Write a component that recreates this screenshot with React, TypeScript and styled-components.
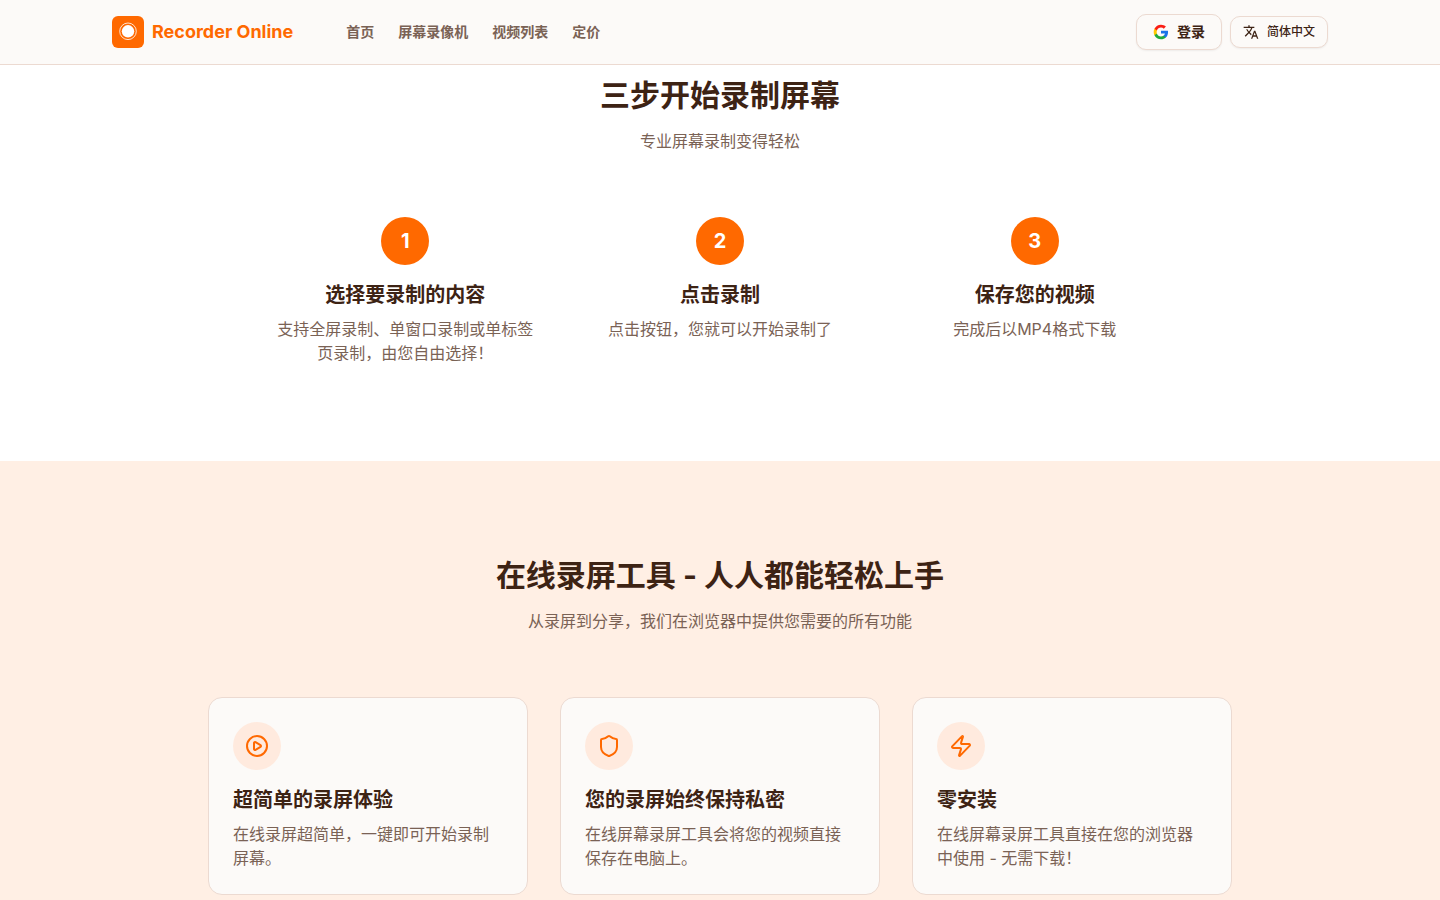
import React from 'react';
import styled, { createGlobalStyle } from 'styled-components';
import { CirclePlay, Shield, Zap } from 'lucide-react';
import { MdTranslate } from 'react-icons/md';

const color = {
  brand: '#ff6900',
  ink: '#3d2314',
  muted: '#7a6255',
  surface: '#fcfaf8',
  line: '#ecdad1',
  peach: '#ffefe4',
  badge: '#ffeade',
};

const GlobalStyle = createGlobalStyle`
  *, *::before, *::after { box-sizing: border-box; }
  body {
    margin: 0;
    background: #ffffff;
    color: ${color.ink};
    font-family: Inter, 'Noto Sans CJK SC', sans-serif;
    font-size: 16px;
    line-height: 24px;
    -webkit-font-smoothing: antialiased;
  }
  h1, h2, h3, p, ul, ol { margin: 0; padding: 0; }
  ul, ol { list-style: none; }
`;

const Page = styled.div`
  min-height: 100vh;
  display: flex;
  flex-direction: column;
`;

const Header = styled.header`
  position: sticky;
  top: 0;
  z-index: 10;
  background: ${color.surface};
  border-bottom: 1px solid ${color.line};
`;

const HeaderInner = styled.div`
  max-width: 1280px;
  height: 64px;
  margin: 0 auto;
  padding: 0 32px;
  display: flex;
  align-items: center;
`;

const Brand = styled.a`
  display: flex;
  align-items: center;
  gap: 8px;
  color: ${color.brand};
  font-size: 18px;
  line-height: 28px;
  font-weight: 700;
  text-decoration: none;
`;

const Nav = styled.nav`
  display: flex;
  gap: 24px;
  margin-left: 53px;
`;

const NavLink = styled.a`
  color: ${color.muted};
  font-size: 14px;
  line-height: 20px;
  font-weight: 600;
  text-decoration: none;
`;

const Actions = styled.div`
  display: flex;
  align-items: center;
  gap: 8px;
  margin-left: auto;
`;

const ActionButton = styled.button<{ $small?: boolean }>`
  display: inline-flex;
  align-items: center;
  gap: 8px;
  height: ${({ $small }) => ($small ? 32 : 36)}px;
  padding: 0 ${({ $small }) => ($small ? 12 : 16)}px;
  border: 1px solid ${color.line};
  border-radius: 10px;
  background: ${color.surface};
  box-shadow: 0 1px 2px rgba(0, 0, 0, 0.06);
  color: ${color.ink};
  font-family: inherit;
  font-size: ${({ $small }) => ($small ? 12 : 14)}px;
  line-height: ${({ $small }) => ($small ? 16 : 20)}px;
  font-weight: ${({ $small }) => ($small ? 500 : 600)};
  cursor: pointer;
`;

const StepsSection = styled.section`
  padding: 12px 32px 96px;
`;

const FeaturesSection = styled.section`
  flex: 1;
  padding: 96px 32px 4px;
  background: ${color.peach};
`;

const SectionHead = styled.div`
  margin-bottom: 64px;
  text-align: center;
`;

const SectionTitle = styled.h2`
  font-size: 30px;
  line-height: 36px;
  font-weight: 700;
`;

const SectionLead = styled.p`
  margin-top: 16px;
  color: ${color.muted};
`;

const StepList = styled.ol`
  max-width: 896px;
  margin: 0 auto;
  display: grid;
  grid-template-columns: repeat(3, 1fr);
  gap: 48px;
`;

const Step = styled.li`
  text-align: center;
`;

const StepNumber = styled.div`
  width: 48px;
  height: 48px;
  margin: 0 auto 16px;
  display: flex;
  align-items: center;
  justify-content: center;
  border-radius: 50%;
  background: ${color.brand};
  color: #ffffff;
  font-size: 20px;
  line-height: 28px;
  font-weight: 700;
`;

const ItemTitle = styled.h3`
  margin-bottom: 8px;
  font-size: 20px;
  line-height: 28px;
  font-weight: 600;
`;

const ItemText = styled.p`
  color: ${color.muted};
`;

const CardGrid = styled.ul`
  max-width: 1024px;
  margin: 0 auto;
  display: grid;
  grid-template-columns: repeat(3, 1fr);
  gap: 32px;
`;

const Card = styled.li`
  padding: 24px;
  border: 1px solid ${color.line};
  border-radius: 14px;
  background: ${color.surface};
`;

const IconBadge = styled.div`
  width: 48px;
  height: 48px;
  margin-bottom: 16px;
  display: flex;
  align-items: center;
  justify-content: center;
  border-radius: 50%;
  background: ${color.badge};
  color: ${color.brand};
`;

const Logo = () => (
  <svg width="32" height="32" viewBox="0 0 32 32" aria-hidden="true">
    <rect width="32" height="32" rx="6" fill={color.brand} />
    <circle cx="16" cy="15.3" r="8.3" fill="none" stroke="#ffffff" strokeWidth="1" opacity="0.8" />
    <circle cx="16" cy="15.3" r="6.2" fill="#ffffff" />
  </svg>
);

const GoogleIcon = () => (
  <svg width="16" height="16" viewBox="0 0 24 24" aria-hidden="true">
    <path fill="#1a73e8" d="M22.56 12.25c0-.78-.07-1.53-.2-2.25H12v4.26h5.92c-.26 1.37-1.04 2.53-2.21 3.31v2.77h3.57c2.08-1.92 3.28-4.74 3.28-8.09z" />
    <path fill="#1fa83c" d="M12 23c2.97 0 5.46-.98 7.28-2.66l-3.57-2.77c-.98.66-2.23 1.06-3.71 1.06-2.86 0-5.29-1.93-6.16-4.53H2.18v2.84C3.99 20.53 7.7 23 12 23z" />
    <path fill="#ffc800" d="M5.84 14.09c-.22-.66-.35-1.36-.35-2.09s.13-1.43.35-2.09V7.07H2.18C1.43 8.55 1 10.22 1 12s.43 3.45 1.18 4.93l3.66-2.84z" />
    <path fill="#fa1e14" d="M12 5.38c1.62 0 3.06.56 4.21 1.64l3.15-3.15C17.45 2.09 14.97 1 12 1 7.7 1 3.99 3.47 2.18 7.07l3.66 2.84C6.71 7.31 9.14 5.38 12 5.38z" />
  </svg>
);

const navItems = ['首页', '屏幕录像机', '视频列表', '定价'];

const steps = [
  { title: '选择要录制的内容', text: '支持全屏录制、单窗口录制或单标签页录制，由您自由选择！' },
  { title: '点击录制', text: '点击按钮，您就可以开始录制了' },
  { title: '保存您的视频', text: '完成后以MP4格式下载' },
];

const features = [
  { Icon: CirclePlay, title: '超简单的录屏体验', text: '在线录屏超简单，一键即可开始录制屏幕。' },
  { Icon: Shield, title: '您的录屏始终保持私密', text: '在线屏幕录屏工具会将您的视频直接保存在电脑上。' },
  { Icon: Zap, title: '零安装', text: '在线屏幕录屏工具直接在您的浏览器中使用 - 无需下载！' },
];

export default function App() {
  return (
    <Page lang="zh-CN">
      <GlobalStyle />
      <Header>
        <HeaderInner>
          <Brand href="#">
            <Logo />
            Recorder Online
          </Brand>
          <Nav>
            {navItems.map((item) => (
              <NavLink key={item} href="#">{item}</NavLink>
            ))}
          </Nav>
          <Actions>
            <ActionButton type="button">
              <GoogleIcon />
              登录
            </ActionButton>
            <ActionButton type="button" $small>
              <MdTranslate size={16} />
              简体中文
            </ActionButton>
          </Actions>
        </HeaderInner>
      </Header>
      <StepsSection>
        <SectionHead>
          <SectionTitle>三步开始录制屏幕</SectionTitle>
          <SectionLead>专业屏幕录制变得轻松</SectionLead>
        </SectionHead>
        <StepList>
          {steps.map((step, i) => (
            <Step key={step.title}>
              <StepNumber>{i + 1}</StepNumber>
              <ItemTitle>{step.title}</ItemTitle>
              <ItemText>{step.text}</ItemText>
            </Step>
          ))}
        </StepList>
      </StepsSection>
      <FeaturesSection>
        <SectionHead>
          <SectionTitle>在线录屏工具 - 人人都能轻松上手</SectionTitle>
          <SectionLead>从录屏到分享，我们在浏览器中提供您需要的所有功能</SectionLead>
        </SectionHead>
        <CardGrid>
          {features.map(({ Icon, title, text }) => (
            <Card key={title}>
              <IconBadge>
                <Icon size={24} />
              </IconBadge>
              <ItemTitle>{title}</ItemTitle>
              <ItemText>{text}</ItemText>
            </Card>
          ))}
        </CardGrid>
      </FeaturesSection>
    </Page>
  );
}
